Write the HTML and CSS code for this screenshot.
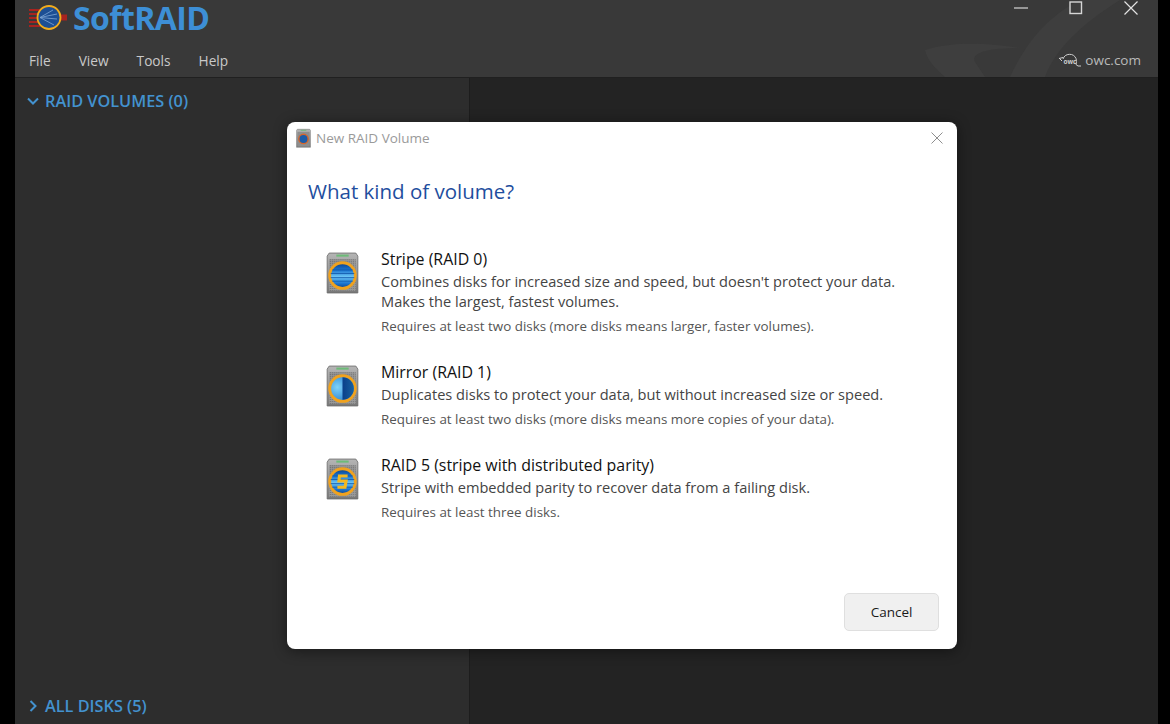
FILE: index.html
```html
<!DOCTYPE html>
<html lang="en">
<head>
<meta charset="utf-8">
<title>SoftRAID</title>
<link rel="stylesheet" href="styles.css">
</head>
<body>
<svg class="defs" width="0" height="0" aria-hidden="true">
  <defs>
    <linearGradient id="case" x1="0" y1="0" x2="0" y2="1"><stop offset="0" stop-color="#b5b5b5"/><stop offset="1" stop-color="#787878"/></linearGradient>
    <linearGradient id="ball" x1="0" y1="0" x2="0" y2="1"><stop offset="0" stop-color="#0a3f8c"/><stop offset=".3" stop-color="#1e78d2"/><stop offset=".55" stop-color="#6cc6f6"/><stop offset=".8" stop-color="#1e78d2"/><stop offset="1" stop-color="#0a3f8c"/></linearGradient>
    <radialGradient id="lit" cx=".3" cy=".45" r=".7"><stop offset="0" stop-color="#7fd2f8"/><stop offset="1" stop-color="#1d78cf"/></radialGradient>
    <linearGradient id="shade" x1="0" y1="0" x2="1" y2="0"><stop offset="0" stop-color="#0a3f8a"/><stop offset="1" stop-color="#17609f"/></linearGradient>
    <pattern id="mesh" width="2" height="2" patternUnits="userSpaceOnUse"><rect width="2" height="2" fill="#9a9a9a"/><rect width="1" height="1" fill="#6a6a6a"/></pattern>
    <symbol id="box" viewBox="0 0 32 42">
      <path d="M3 2h26l2 3v36H1V5z" fill="url(#case)" stroke="#6c6c6c" stroke-width=".8"/>
      <rect x="3" y="8" width="26" height="31" fill="url(#mesh)"/>
      <rect x="10" y="3.500" width="12" height="2" fill="#6dbb78"/>
    </symbol>
  </defs>
</svg>
<div class="window">
  <header class="header">
    <svg class="swoosh" width="260" height="77" viewBox="0 0 260 77" aria-hidden="true">
      <path d="M20 50C50 40 90 44 115 48C85 48 65 52 70 62L80 77H40C30 68 22 60 20 50z" fill="#3e3e3e"/>
      <path d="M105 77C120 45 140 18 175 0H215C175 25 150 50 140 77z" fill="#3e3e3e"/>
    </svg>
    <div class="top">
      <div class="brand">
        <svg class="logo" viewBox="0 0 38 26" aria-hidden="true">
          <path d="M0 4h11v2H0zM0 8h9v2H0zM0 12h9v2H0zM0 16h9v2H0zM0 20h11v2H0z" fill="#a8231f"/>
          <rect x="30" y="9.500" width="8" height="6" fill="#a8231f"/>
          <circle cx="20" cy="12.500" r="11.500" fill="#1d4f94" stroke="#f2ac1c" stroke-width="1.800"/>
          <path d="M11 12.500L24 5M11 12.500L28 9M11 12.500L28 14M11 12.500L25 20" stroke="#7fa6d6" stroke-width=".8" fill="none"/>
        </svg>
        <span class="brand-name">SoftRAID</span>
      </div>
      <div class="controls">
        <svg width="14" height="14" viewBox="0 0 14 14" aria-hidden="true"><path d="M0 7h14" stroke="#d6d6d6" stroke-width="1.200"/></svg>
        <svg width="14" height="14" viewBox="0 0 14 14" aria-hidden="true"><rect x="1" y="1" width="11.500" height="11.500" fill="none" stroke="#d6d6d6" stroke-width="1.400"/></svg>
        <svg width="14" height="14" viewBox="0 0 14 14" aria-hidden="true"><path d="M.5.500l13 13M13.500.500l-13 13" stroke="#e2e2e2" stroke-width="1.200"/></svg>
      </div>
    </div>
    <div class="bottom">
      <nav class="menu"><span>File</span><span>View</span><span>Tools</span><span>Help</span></nav>
      <div class="owc">
        <svg width="24" height="16" viewBox="0 0 24 16" aria-hidden="true">
          <path d="M5 7a7 7 0 0 1 13-.500c.5 2 .5 4 0 6M1 6l3 3M1 6.500l4-1M18 12.500l2 1.500h3" fill="none" stroke="#cfcfcf" stroke-width="1"/>
          <text class="owc-mark" x="12" y="11.500" text-anchor="middle">owc</text>
        </svg>
        <span>owc.com</span>
      </div>
    </div>
  </header>
  <div class="panes">
    <aside class="sidebar">
      <div class="group">
        <svg class="chev" width="12" height="12" viewBox="0 0 12 12" aria-hidden="true"><path d="M1 3.500l5 5 5-5" fill="none" stroke="#4392cf" stroke-width="2"/></svg>
        <span>RAID VOLUMES (0)</span>
      </div>
      <div class="group">
        <svg class="chev" width="12" height="12" viewBox="0 0 12 12" aria-hidden="true"><path d="M3.500 1l5 5-5 5" fill="none" stroke="#4392cf" stroke-width="2"/></svg>
        <span>ALL DISKS (5)</span>
      </div>
    </aside>
    <main class="content"></main>
  </div>
</div>

<section class="dialog" aria-label="New RAID Volume">
  <div class="titlebar">
    <div class="title-left">
      <svg class="mini" viewBox="0 0 32 42" aria-hidden="true">
        <use href="#box"/>
        <circle cx="16" cy="23" r="10" fill="#1c5ca8" stroke="#d8662a" stroke-width="3"/>
      </svg>
      <span>New RAID Volume</span>
    </div>
    <svg width="12" height="12" viewBox="0 0 12 12" aria-hidden="true"><path d="M.5.500l11 11M11.500.500l-11 11" stroke="#8e8e8e" stroke-width="1"/></svg>
  </div>
  <h1 class="heading">What kind of volume?</h1>
  <div class="options">
    <div class="option option-a">
      <svg class="icon" viewBox="0 0 32 42" aria-hidden="true">
        <use href="#box"/>
        <circle cx="16" cy="24" r="12.500" fill="url(#ball)" stroke="#f0a21e" stroke-width="2.800"/>
        <path d="M6 18.500h20M4.500 22h23M4.500 26h23M6 29.500h20" stroke="#0d52a6" stroke-width=".9" opacity=".8"/>
      </svg>
      <div class="text">
        <div class="name">Stripe (RAID 0)</div>
        <div class="desc">Combines disks for increased size and speed, but doesn't protect your data.<br>Makes the largest, fastest volumes.</div>
        <div class="note">Requires at least two disks (more disks means larger, faster volumes).</div>
      </div>
    </div>
    <div class="option option-b">
      <svg class="icon" viewBox="0 0 32 42" aria-hidden="true">
        <use href="#box"/>
        <circle cx="16" cy="24" r="12.500" fill="url(#lit)" stroke="#f0a21e" stroke-width="2.800"/>
        <path d="M16 13a11 11 0 0 1 0 22z" fill="url(#shade)"/>
      </svg>
      <div class="text">
        <div class="name">Mirror (RAID 1)</div>
        <div class="desc">Duplicates disks to protect your data, but without increased size or speed.</div>
        <div class="note">Requires at least two disks (more disks means more copies of your data).</div>
      </div>
    </div>
    <div class="option">
      <svg class="icon" viewBox="0 0 32 42" aria-hidden="true">
        <use href="#box"/>
        <circle cx="16" cy="24" r="12.500" fill="url(#ball)" stroke="#f0a21e" stroke-width="2.800"/>
        <path d="M6 18.500h20M4.500 22h23M4.500 26h23M6 29.500h20" stroke="#0d52a6" stroke-width=".9" opacity=".8"/>
        <path d="M21 18.500h-8l-.5 5H19.500l-1 6h-7.500" fill="none" stroke="#f5b81f" stroke-width="3"/>
      </svg>
      <div class="text">
        <div class="name">RAID 5 (stripe with distributed parity)</div>
        <div class="desc">Stripe with embedded parity to recover data from a failing disk.</div>
        <div class="note">Requires at least three disks.</div>
      </div>
    </div>
  </div>
  <div class="actions"><button class="cancel" type="button">Cancel</button></div>
</section>
</body>
</html>
```
FILE: styles.css
```css
* { box-sizing: border-box; }
html, body { height: 100%; }
body {
  margin: 0;
  background: #000;
  font-family: "Open Sans", "Noto Sans", "Liberation Sans", sans-serif;
  overflow: hidden;
  position: relative;
}
.defs { position: absolute; }
.window {
  width: 1143px;
  height: 724px;
  margin-left: 15px;
  display: flex;
  flex-direction: column;
}
.header {
  position: relative;
  height: 78px;
  background: #393939;
  border-bottom: 1px solid #202020;
  padding: 0 17px 0 14px;
  display: flex;
  flex-direction: column;
  justify-content: space-between;
}
.swoosh { position: absolute; left: 890px; top: 0; }
.top, .bottom { position: relative; }
.top { display: flex; justify-content: space-between; }
.brand { display: flex; align-items: center; gap: 6px; height: 35px; }
.logo { width: 38px; height: 26px; }
.brand-name {
  font-size: 32px;
  font-weight: 700;
  color: #3d8fd6;
  letter-spacing: -.6px;
  line-height: 35px;
}
.controls { display: flex; gap: 41px; padding: 1px 3px 0 0; height: 16px; }
.bottom { display: flex; justify-content: space-between; align-items: center; height: 34px; }
.menu { display: flex; gap: 28px; font-size: 13.700px; color: #c9c9c9; }
.owc { display: flex; align-items: center; gap: 3px; font-size: 13.500px; color: #b9b9b9; }
.owc-mark { font-size: 6.500px; font-weight: 700; fill: #cfcfcf; }
.panes { flex: 1; display: flex; min-height: 0; }
.sidebar {
  width: 455px;
  background: #2d2d2d;
  border-right: 1px solid #1d1d1d;
  padding: 11px 13px 6px 12px;
  display: flex;
  flex-direction: column;
  justify-content: space-between;
}
.group {
  display: flex;
  align-items: center;
  gap: 6px;
  height: 24px;
  font-size: 16.300px;
  font-weight: 600;
  color: #4392cf;
}
.content { flex: 1; background: #232323; }
.dialog {
  position: absolute;
  left: 287px;
  top: 122px;
  width: 670px;
  height: 527px;
  background: #fff;
  border-radius: 8px;
  box-shadow: 0 2px 14px rgba(0,0,0,.45);
  display: flex;
  flex-direction: column;
  padding: 0 18px 18px 21px;
}
.titlebar {
  height: 32px;
  margin: 0 -4px 0 -12px;
  display: flex;
  align-items: center;
  justify-content: space-between;
  font-size: 13.500px;
  color: #9a9a9a;
}
.title-left { display: flex; align-items: center; gap: 5px; }
.mini { width: 15px; height: 20px; }
.heading {
  margin: 22px 0 0;
  font-size: 20.500px;
  line-height: 30px;
  font-weight: 400;
  color: #1f4e9e;
}
.options { margin: 42px 0 0 18px; flex: 1; }
.option { display: flex; gap: 22px; }
.option-a, .option-b { margin-bottom: 25px; }
.icon { width: 33px; height: 43px; margin-top: 3px; flex: none; }
.text { display: flex; flex-direction: column; }
.name { font-size: 15.900px; line-height: 23px; color: #111; }
.desc { font-size: 14.600px; line-height: 20px; color: #444; }
.note { font-size: 13.400px; line-height: 20px; color: #555; margin-top: 5px; }
.actions { display: flex; justify-content: flex-end; }
.cancel {
  width: 95px;
  height: 38px;
  font: inherit;
  font-size: 13.500px;
  color: #1a1a1a;
  background: #f0f0f0;
  border: 1px solid #dfdfdf;
  border-radius: 5px;
}
```
